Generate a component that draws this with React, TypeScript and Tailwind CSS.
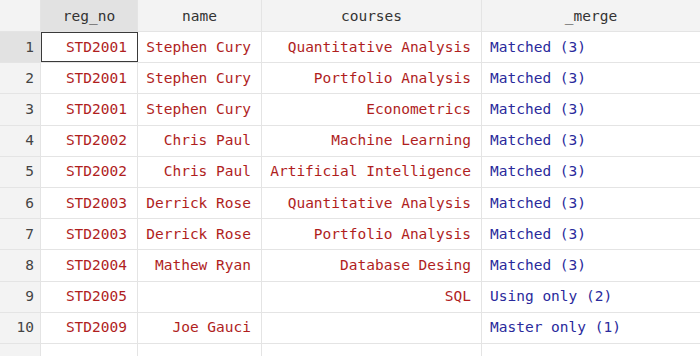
import React from "react";

type Row = { id: number; reg: string; name: string; course: string; merge: string };

const rows: Row[] = [
  { id: 1, reg: "STD2001", name: "Stephen Cury", course: "Quantitative Analysis", merge: "Matched (3)" },
  { id: 2, reg: "STD2001", name: "Stephen Cury", course: "Portfolio Analysis", merge: "Matched (3)" },
  { id: 3, reg: "STD2001", name: "Stephen Cury", course: "Econometrics", merge: "Matched (3)" },
  { id: 4, reg: "STD2002", name: "Chris Paul", course: "Machine Learning", merge: "Matched (3)" },
  { id: 5, reg: "STD2002", name: "Chris Paul", course: "Artificial Intelligence", merge: "Matched (3)" },
  { id: 6, reg: "STD2003", name: "Derrick Rose", course: "Quantitative Analysis", merge: "Matched (3)" },
  { id: 7, reg: "STD2003", name: "Derrick Rose", course: "Portfolio Analysis", merge: "Matched (3)" },
  { id: 8, reg: "STD2004", name: "Mathew Ryan", course: "Database Desing", merge: "Matched (3)" },
  { id: 9, reg: "STD2005", name: "", course: "SQL", merge: "Using only (2)" },
  { id: 10, reg: "STD2009", name: "Joe Gauci", course: "", merge: "Master only (1)" },
];

const App: React.FC = () => {
  return (
    <div
      className="w-[700px] h-[356px] overflow-hidden bg-white text-[14.5px]"
      style={{ fontFamily: '"DejaVu Sans Mono", "Liberation Mono", monospace' }}
    >
      {/* header */}
      <div className="flex h-[32px] border-b border-[#e4e4e4] text-[#333]">
        <div className="w-[41px] bg-[#f3f3f3] border-r border-[#e4e4e4]" />
        <div className="w-[97px] bg-[#e2e2e2] border-r border-[#e4e4e4] flex items-center justify-center pt-[3px]">reg_no</div>
        <div className="w-[124px] bg-[#f3f3f3] border-r border-[#e4e4e4] flex items-center justify-center pt-[3px]">name</div>
        <div className="w-[220px] bg-[#f3f3f3] border-r border-[#e4e4e4] flex items-center justify-center pt-[3px]">courses</div>
        <div className="flex-1 bg-[#f3f3f3] flex items-center justify-center pt-[3px]">_merge</div>
      </div>
      {rows.map((r) => (
        <div key={r.id} className="flex h-[31.2px] border-b border-[#e4e4e4]">
          <div
            className={`w-[41px] border-r border-[#e4e4e4] flex items-center justify-end pr-[6px] pt-[1px] text-[#444] ${
              r.id === 1 ? "bg-[#e2e2e2]" : "bg-[#f3f3f3]"
            }`}
          >
            {r.id}
          </div>
          <div
            className={`w-[97px] border-r border-[#e4e4e4] flex items-center justify-end pr-[10px] pt-[1px] text-[#b01e1e] ${
              r.id === 1 ? "outline-[1.5px] outline-solid outline-[#3a3a3a] -outline-offset-1" : ""
            }`}
          >
            {r.reg}
          </div>
          <div className="w-[124px] border-r border-[#e4e4e4] flex items-center justify-end pr-[10px] pt-[1px] text-[#b01e1e]">
            {r.name}
          </div>
          <div className="w-[220px] border-r border-[#e4e4e4] flex items-center justify-end pr-[10px] pt-[1px] text-[#b01e1e]">
            {r.course}
          </div>
          <div className="flex-1 flex items-center pl-[8px] pt-[1px] text-[#2a2a9c]">{r.merge}</div>
        </div>
      ))}
      <div className="flex h-[31px]">
        <div className="w-[41px] bg-[#f3f3f3] border-r border-[#e4e4e4]" />
        <div className="w-[97px] border-r border-[#e4e4e4]" />
        <div className="w-[124px] border-r border-[#e4e4e4]" />
        <div className="w-[220px] border-r border-[#e4e4e4]" />
        <div className="flex-1" />
      </div>
    </div>
  );
};

export default App;
